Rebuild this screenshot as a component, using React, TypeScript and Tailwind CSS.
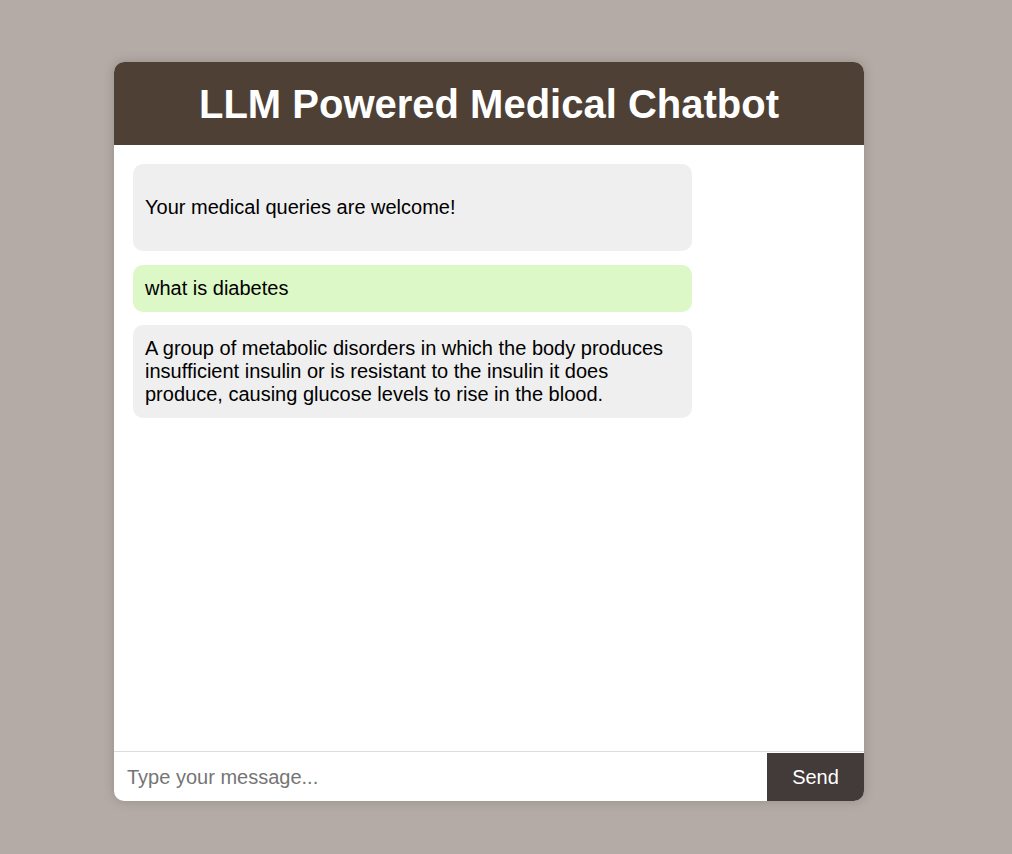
import React, { useState } from "react";

type Msg = { from: "bot" | "user"; text: string; spaced?: boolean };

const messages: Msg[] = [
  { from: "bot", text: "Your medical queries are welcome!", spaced: true },
  { from: "user", text: "what is diabetes" },
  {
    from: "bot",
    text: "A group of metabolic disorders in which the body produces insufficient insulin or is resistant to the insulin it does produce, causing glucose levels to rise in the blood.",
  },
];

export default function App() {
  const [value, setValue] = useState("");

  return (
    <div className="min-h-screen bg-[#b5aba6] pt-[62px] font-['Liberation_Sans',Arial,sans-serif]">
      <div className="ml-[114px] flex h-[739px] w-[750px] flex-col overflow-hidden rounded-[10px] bg-white shadow-[0_0_12px_rgba(0,0,0,0.18)]">
        <div className="flex h-[83px] items-center justify-center bg-[#4e4034]">
          <h1 className="text-[40px] font-bold leading-[46px] text-white">LLM Powered Medical Chatbot</h1>
        </div>

        <div className="flex flex-1 flex-col gap-[13.5px] overflow-y-auto p-[19px]">
          {messages.map((m, i) => (
            <div
              key={i}
              className={
                "w-[559px] rounded-[10px] px-[12px] py-[12px] text-[20px] leading-[23px] text-black " +
                (m.from === "user" ? "bg-[#dcf8c6]" : "bg-[#efefef]")
              }
            >
              {m.spaced ? <p className="my-[20px]">{m.text}</p> : m.text}
            </div>
          ))}
        </div>

        <div className="flex h-[50px] border-t border-[#dddddd]">
          <input
            value={value}
            onChange={(e) => setValue(e.target.value)}
            placeholder="Type your message..."
            className="flex-1 px-[13px] text-[20px] text-black outline-none placeholder:text-[#757575]"
          />
          <button className="mt-px w-[97px] bg-[#433a3a] text-[20px] text-white">Send</button>
        </div>
      </div>
    </div>
  );
}
